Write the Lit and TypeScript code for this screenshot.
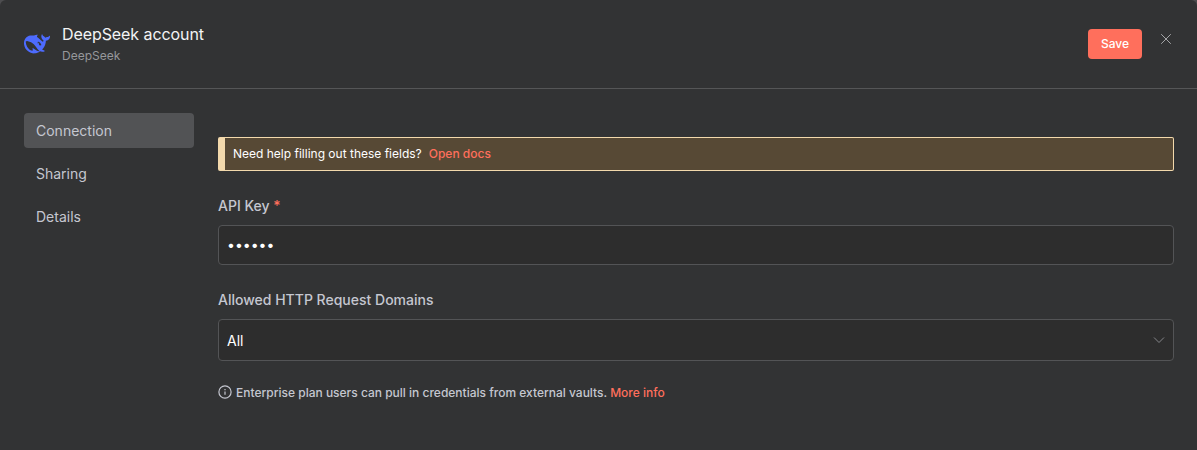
import { LitElement, html, css, svg } from "lit";
import { customElement, state } from "lit/decorators.js";
import { classMap } from "lit/directives/class-map.js";

const whale = svg`<path fill="#4d6bfe" d="M23.748 4.482c-.254-.124-.364.113-.512.234-.051.039-.094.09-.137.136-.372.397-.806.657-1.373.626-.829-.046-1.537.214-2.163.848-.133-.782-.575-1.248-1.247-1.548-.352-.156-.708-.311-.955-.65-.172-.241-.219-.51-.305-.774-.055-.16-.11-.323-.293-.35-.2-.031-.278.136-.356.276-.313.572-.434 1.202-.422 1.84.027 1.436.633 2.58 1.838 3.393.137.093.172.187.129.323-.082.28-.18.552-.266.833-.055.179-.137.217-.329.14a5.526 5.526 0 01-1.736-1.18c-.857-.828-1.631-1.742-2.597-2.458a11.365 11.365 0 00-.689-.471c-.985-.957.13-1.743.388-1.836.27-.098.093-.432-.779-.428-.872.004-1.67.295-2.687.684a3.055 3.055 0 01-.465.137 9.597 9.597 0 00-2.883-.102c-1.885.21-3.39 1.102-4.497 2.623C.082 8.606-.231 10.684.152 12.85c.403 2.284 1.569 4.175 3.36 5.653 1.858 1.533 3.997 2.284 6.438 2.14 1.482-.085 3.133-.284 4.994-1.86.47.234.962.327 1.78.397.63.059 1.236-.03 1.705-.128.735-.156.684-.837.419-.961-2.155-1.004-1.682-.595-2.113-.926 1.096-1.296 2.746-2.642 3.392-7.003.05-.347.007-.565 0-.845-.004-.17.035-.237.23-.256a4.173 4.173 0 001.545-.475c1.396-.763 1.96-2.015 2.093-3.517.02-.23-.004-.467-.247-.588zM11.581 18c-2.089-1.642-3.102-2.183-3.52-2.16-.392.024-.321.471-.235.763.09.288.207.486.371.739.114.167.192.416-.113.603-.673.416-1.842-.14-1.897-.167-1.361-.802-2.5-1.86-3.301-3.307-.774-1.393-1.224-2.887-1.298-4.482-.02-.386.093-.522.477-.592a4.696 4.696 0 011.529-.039c2.132.312 3.946 1.265 5.468 2.774.868.86 1.525 1.887 2.202 2.891.72 1.066 1.494 2.082 2.48 2.914.348.292.625.514.891.677-.802.09-2.14.11-3.054-.614zm1-6.44a.306.306 0 01.415-.287.302.302 0 01.2.288.306.306 0 01-.31.307.303.303 0 01-.304-.308zm3.11 1.596c-.2.081-.399.151-.59.16a1.245 1.245 0 01-.798-.254c-.274-.23-.47-.358-.552-.758a1.73 1.73 0 01.016-.588c.07-.327-.008-.537-.239-.727-.187-.156-.426-.199-.688-.199a.559.559 0 01-.254-.078c-.11-.054-.2-.191-.114-.358.028-.054.16-.186.192-.21.356-.202.767-.136 1.146.016.352.144.618.408 1.001.782.391.451.462.576.685.914.176.265.336.537.445.848.067.195-.019.354-.25.452z"/>`;

@customElement("app-root")
export class AppRoot extends LitElement {
  @state() private tab = "Connection";

  static styles = css`
    :host {
      display: block;
      height: 100vh;
      background: #4d4d4f;
      font-family: Inter, "Liberation Sans", sans-serif;
      color: #c5c7d0;
    }
    * { box-sizing: border-box; }
    .modal {
      height: 100%;
      background: #323334;
      border-radius: 6px 6px 0 0;
      overflow: hidden;
    }
    .header {
      height: 89px;
      display: flex;
      align-items: flex-start;
      padding: 24px 23px 0 24px;
      border-bottom: 1px solid #555657;
    }
    .logo { width: 26px; height: 26px; margin: 7px 12px 0 0; flex: none; }
    .names { flex: 1; }
    .title { font-size: 16px; line-height: 20px; color: #f3f4f5; letter-spacing: -0.08px; }
    .kind { font-size: 12px; line-height: 16px; margin-top: 4px; color: #96979b; }
    .save {
      width: 54px; height: 30px; margin-top: 5px; padding: 0;
      border: 0; border-radius: 4px; background: #ff6f5c; color: #fff;
      font: 500 12px/30px Inter, sans-serif;
    }
    .close { width: 12px; height: 12px; margin: 9px 2px 0 18px; flex: none; }
    .body { display: flex; gap: 24px; padding: 24px 23px 0 24px; }
    .tabs { width: 170px; display: flex; flex-direction: column; gap: 8px; }
    .tab {
      height: 35px; padding: 0 12px; border: 0; border-radius: 4px;
      background: none; color: #c5c7d0; text-align: left;
      font: 400 14px/35px Inter, sans-serif;
    }
    .active { background: #525355; }
    .content { flex: 1; padding-top: 24px; }
    .notice {
      height: 34px; display: flex; gap: 7px;
      padding-left: 8px; border: 1px solid #f3d9ac; border-left-width: 7px;
      border-radius: 2px; background: #574935;
      font-size: 12px; line-height: 32px; color: #fff;
    }
    .link { color: #ff6f5c; font-weight: 500; }
    .label { font-size: 14px; font-weight: 500; line-height: 18px; margin: 26px 0 10px; }
    .required { color: #ff6f5c; }
    .field {
      height: 40px; border: 1px solid #535456; border-radius: 4px;
      background: #2d2d2d; color: #fff; padding: 0 8px;
      display: flex; align-items: center; font-size: 14px;
    }
    .select { height: 42px; justify-content: space-between; }
    .dots { padding-bottom: 2px; }
    .chevron { width: 12px; height: 12px; }
    .info {
      display: flex; align-items: center; margin-top: 24px;
      font-size: 12px; font-weight: 500; line-height: 16px;
    }
    .info-icon { width: 14px; height: 14px; margin: 0 4px 2px 0; }
    .more { margin-left: 3px; }
  `;

  render() {
    return html`
      <div class="modal">
        <div class="header">
          <svg class="logo" viewBox="0 0 24 24">${whale}</svg>
          <div class="names">
            <div class="title">DeepSeek account</div>
            <div class="kind">DeepSeek</div>
          </div>
          <button class="save">Save</button>
          <svg class="close" viewBox="0 0 12 12" fill="none" stroke="#a5a6a8">
            <path d="M1.2 1.2l9.6 9.6M10.8 1.2l-9.6 9.6" />
          </svg>
        </div>
        <div class="body">
          <div class="tabs">
            ${["Connection", "Sharing", "Details"].map(
              (t) => html`<button
                class=${classMap({ tab: true, active: t === this.tab })}
                @click=${() => (this.tab = t)}
              >${t}</button>`
            )}
          </div>
          <div class="content">
            <div class="notice">
              <span>Need help filling out these fields?</span><span class="link">Open docs</span>
            </div>
            <div class="label">API Key <span class="required">*</span></div>
            <div class="field"><span class="dots">••••••</span></div>
            <div class="label">Allowed HTTP Request Domains</div>
            <div class="field select">
              <span>All</span>
              <svg class="chevron" viewBox="0 0 12 12" fill="none" stroke="#85868a">
                <path d="M1 3.5l5 5 5-5" />
              </svg>
            </div>
            <div class="info">
              <svg class="info-icon" viewBox="0 0 14 14" fill="none" stroke="#c5c7d0" stroke-width="1.2">
                <circle cx="7" cy="7" r="6.1" />
                <path d="M7 6.5v3.3M7 4.1v1.1" />
              </svg>
              <span>Enterprise plan users can pull in credentials from external vaults.</span>
              <span class="link more">More info</span>
            </div>
          </div>
        </div>
      </div>
    `;
  }
}
